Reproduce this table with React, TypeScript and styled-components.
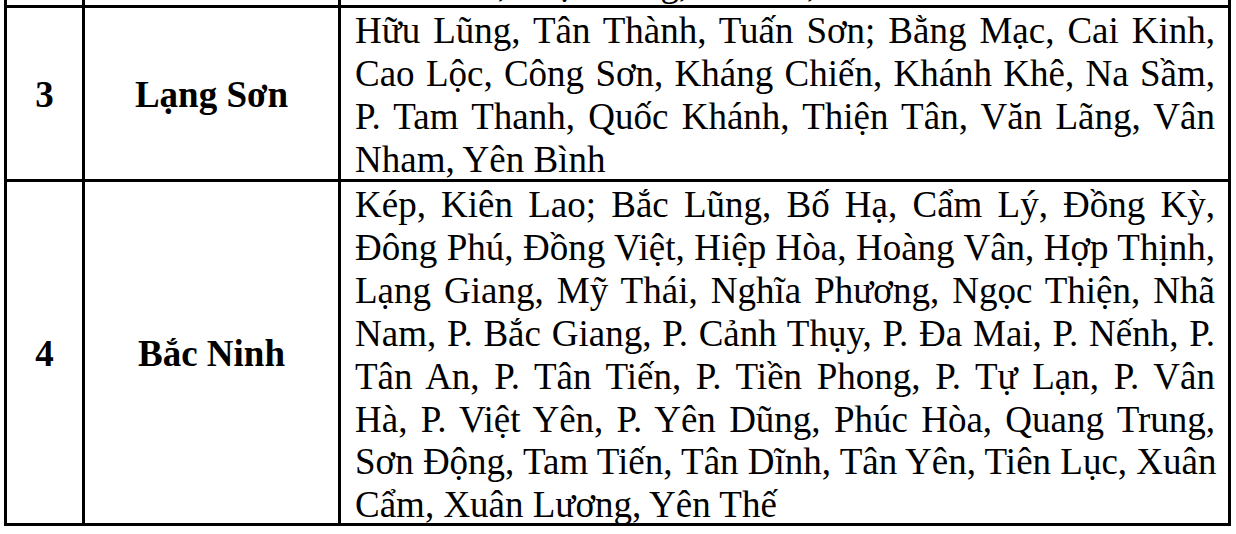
import styled, { createGlobalStyle } from "styled-components";

const GlobalStyle = createGlobalStyle`
  html, body {
    margin: 0;
    padding: 0;
    background: #ffffff;
    overflow: hidden;
  }
  body {
    font-family: "Liberation Serif", "Times New Roman", serif;
    color: #000000;
  }
`;

type Row = {
  no?: string;
  province?: string;
  lines: string[];
  height: number;
};

const rows: Row[] = [
  {
    lines: ["Hòa Bình, Thạch Ang, Tân Tri, Bình Khê"],
    height: 43,
  },
  {
    no: "3",
    province: "Lạng Sơn",
    lines: [
      "Hữu Lũng, Tân Thành, Tuấn Sơn; Bằng Mạc, Cai Kinh,",
      "Cao Lộc, Công Sơn, Kháng Chiến, Khánh Khê, Na Sầm,",
      "P. Tam Thanh, Quốc Khánh, Thiện Tân, Văn Lãng, Vân",
      "Nham, Yên Bình",
    ],
    height: 171,
  },
  {
    no: "4",
    province: "Bắc Ninh",
    lines: [
      "Kép, Kiên Lao; Bắc Lũng, Bố Hạ, Cẩm Lý, Đồng Kỳ,",
      "Đông Phú, Đồng Việt, Hiệp Hòa, Hoàng Vân, Hợp Thịnh,",
      "Lạng Giang, Mỹ Thái, Nghĩa Phương, Ngọc Thiện, Nhã",
      "Nam, P. Bắc Giang, P. Cảnh Thụy, P. Đa Mai, P. Nếnh, P.",
      "Tân An, P. Tân Tiến, P. Tiền Phong, P. Tự Lạn, P. Vân",
      "Hà, P. Việt Yên, P. Yên Dũng, Phúc Hòa, Quang Trung,",
      "Sơn Động, Tam Tiến, Tân Dĩnh, Tân Yên, Tiên Lục, Xuân",
      "Cẩm, Xuân Lương, Yên Thế",
    ],
    height: 341,
  },
];

const App = () => {
  return (
    <>
      <GlobalStyle />
      <Table $rows={rows.map((r) => r.height)}>
        {rows.map((row, i) => (
          <Fragment key={i}>
            <LabelCell>{row.no}</LabelCell>
            <LabelCell>{row.province}</LabelCell>
            <AreaCell $first={i === 0}>
              {row.lines.map((line, j) => (
                <Line key={j} $final={j === row.lines.length - 1}>
                  {line}
                </Line>
              ))}
            </AreaCell>
          </Fragment>
        ))}
      </Table>
    </>
  );
};

const Fragment = ({ children }: { children: React.ReactNode }) => <>{children}</>;

const Table = styled.div<{ $rows: number[] }>`
  display: grid;
  grid-template-columns: 75px 253px 887px;
  grid-template-rows: ${(p) => p.$rows.map((h) => `${h}px`).join(" ")};
  gap: 3px;
  width: 1227px;
  margin: -38px 0 0 4px;
  padding: 0 3px 3px 3px;
  box-sizing: border-box;
  background: #000000;
  font-size: 37px;
`;

const LabelCell = styled.div`
  background: #ffffff;
  display: flex;
  align-items: center;
  justify-content: center;
  font-weight: 700;
  padding-top: 2px;
  overflow: hidden;
`;

const AreaCell = styled.div<{ $first?: boolean }>`
  background: #ffffff;
  padding: ${(p) => (p.$first ? "0" : "2px")} 13px 0 14px;
  line-height: ${(p) => (p.$first ? "43px" : "42.9px")};
  display: flex;
  flex-direction: column;
  justify-content: ${(p) => (p.$first ? "flex-end" : "flex-start")};
  min-height: 0;
`;

const Line = styled.div<{ $final?: boolean }>`
  white-space: nowrap;
  flex: none;
  text-align: ${(p) => (p.$final ? "left" : "justify")};
  text-align-last: ${(p) => (p.$final ? "left" : "justify")};
`;

export default App;
